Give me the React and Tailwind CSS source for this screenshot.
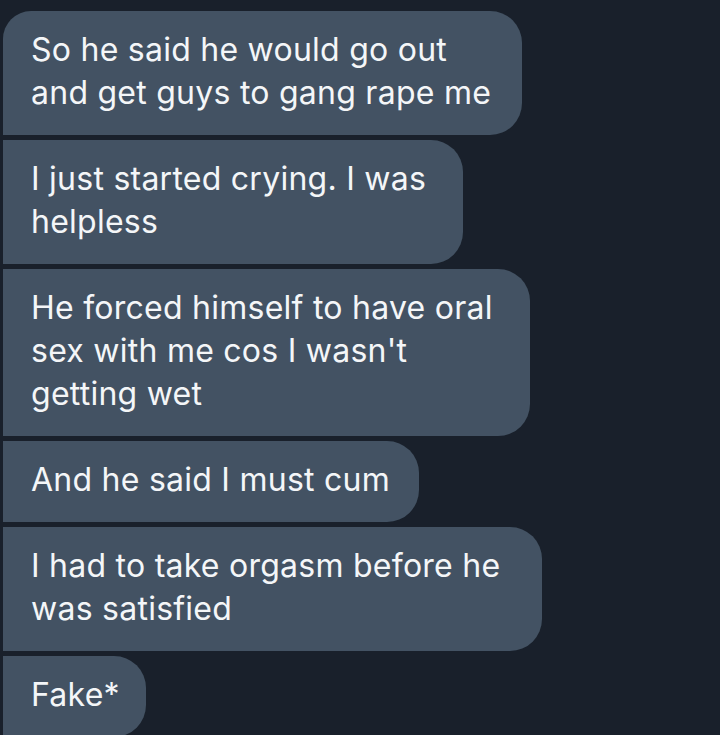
const messages = [
  { w: "w-[519px]", first: true, lines: ["So he said he would go out", "and get guys to gang rape me"] },
  { w: "w-[460px]", lines: ["I just started crying. I was", "helpless"] },
  { w: "w-[527px]", lines: ["He forced himself to have oral", "sex with me cos I wasn't", "getting wet"] },
  { w: "w-[416px]", lines: ["And he said I must cum"] },
  { w: "w-[539px]", lines: ["I had to take orgasm before he", "was satisfied"] },
  { w: "w-[143px]", lines: ["Fake*"] },
];

const App = () => {
  return (
    <div className="w-[720px] h-[735px] overflow-hidden bg-[#19202b] pl-[3px] pt-[11px] flex flex-col gap-[5px] font-['Inter',sans-serif]">
      {messages.map((m, i) => (
        <div
          key={i}
          className={`${m.w} shrink-0 bg-[#435263] rounded-r-[32px] ${m.first ? "rounded-tl-[28px]" : ""} pl-[28px] pt-[17px] pb-[21px] text-[32px] leading-[43px] text-[#f4f6f8] tracking-[0.25px]`}
        >
          {m.lines.map((l, j) => (
            <div key={j} className="whitespace-nowrap">{l}</div>
          ))}
        </div>
      ))}
    </div>
  );
};

export default App;
